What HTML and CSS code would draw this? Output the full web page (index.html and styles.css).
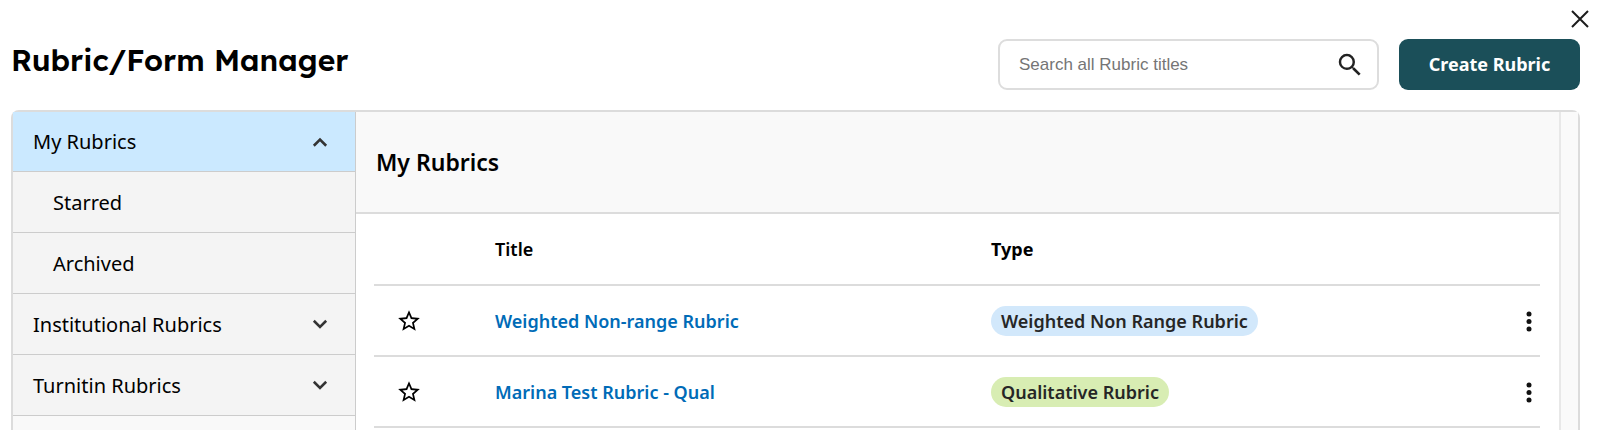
FILE: index.html
```html
<!DOCTYPE html>
<html lang="en">
<head>
  <meta charset="UTF-8" />
  <meta name="viewport" content="width=device-width, initial-scale=1.0"/>
  <title>Rubric/Form Manager</title>
  <link rel="stylesheet" href="styles.css">
</head>
<body>
  <div class="close-row">
    <button class="icon-btn" aria-label="Close">
      <svg width="18" height="18" viewBox="0 0 18 18"><path d="M1 1L17 17M17 1L1 17" fill="none" stroke="#1c1c1c" stroke-width="2"/></svg>
    </button>
  </div>

  <header class="top-bar">
    <h1>Rubric/Form Manager</h1>
    <form class="search-box">
      <input type="text" class="search-input" placeholder="Search all Rubric titles" aria-label="Search all Rubric titles">
      <button type="button" class="icon-btn" aria-label="Search">
        <svg width="30" height="30" viewBox="0 0 24 24" fill="#222"><path d="M15.5 14h-.79l-.28-.27A6.47 6.47 0 0 0 16 9.5 6.5 6.5 0 1 0 9.5 16c1.61 0 3.09-.59 4.23-1.57l.27.28v.79l5 4.99L20.49 19l-4.99-5zm-6 0C7.01 14 5 11.99 5 9.5S7.01 5 9.5 5 14 7.01 14 9.5 11.99 14 9.5 14z"/></svg>
      </button>
    </form>
    <button class="create-btn">Create Rubric</button>
  </header>

  <main class="panel">
    <nav class="sidebar">
      <button class="nav-item active" aria-expanded="true">
        My Rubrics
        <svg width="28" height="28" viewBox="0 0 24 24"><path d="M6.7 15.2L12 9.9l5.3 5.3" fill="none" stroke="#333" stroke-width="2.2"/></svg>
      </button>
      <a href="#" class="nav-item sub-item">Starred</a>
      <a href="#" class="nav-item sub-item">Archived</a>
      <button class="nav-item" aria-expanded="false">
        Institutional Rubrics
        <svg width="28" height="28" viewBox="0 0 24 24"><path d="M6.7 9.2L12 14.5l5.3-5.3" fill="none" stroke="#333" stroke-width="2.2"/></svg>
      </button>
      <button class="nav-item" aria-expanded="false">
        Turnitin Rubrics
        <svg width="28" height="28" viewBox="0 0 24 24"><path d="M6.7 9.2L12 14.5l5.3-5.3" fill="none" stroke="#333" stroke-width="2.2"/></svg>
      </button>
    </nav>

    <section class="content">
      <h2>My Rubrics</h2>
      <div class="table-wrap">
        <table class="rubric-table">
          <thead>
            <tr>
              <th class="star-col"></th>
              <th class="title-col">Title</th>
              <th class="type-col">Type</th>
              <th></th>
            </tr>
          </thead>
          <tbody>
            <tr>
              <td>
                <button class="icon-btn" aria-label="Star rubric">
                  <svg width="26" height="26" viewBox="0 0 24 24"><path d="M22 9.24l-7.19-.62L12 2 9.19 8.63 2 9.24l5.46 4.73L5.82 21 12 17.27 18.18 21l-1.63-7.03L22 9.24zM12 15.4l-3.76 2.27 1-4.28-3.32-2.88 4.38-.38L12 6.1l1.71 4.04 4.38.38-3.32 2.88 1 4.28L12 15.4z"/></svg>
                </button>
              </td>
              <td><a href="#" class="rubric-link">Weighted Non-range Rubric</a></td>
              <td><span class="tag tag-blue">Weighted Non Range Rubric</span></td>
              <td class="menu-cell">
                <button class="icon-btn" aria-label="More options">
                  <svg width="22" height="22" viewBox="0 0 22 22" fill="#111"><circle cx="11" cy="3" r="2.5"/><circle cx="11" cy="10.5" r="2.5"/><circle cx="11" cy="18" r="2.5"/></svg>
                </button>
              </td>
            </tr>
            <tr>
              <td>
                <button class="icon-btn" aria-label="Star rubric">
                  <svg width="26" height="26" viewBox="0 0 24 24"><path d="M22 9.24l-7.19-.62L12 2 9.19 8.63 2 9.24l5.46 4.73L5.82 21 12 17.27 18.18 21l-1.63-7.03L22 9.24zM12 15.4l-3.76 2.27 1-4.28-3.32-2.88 4.38-.38L12 6.1l1.71 4.04 4.38.38-3.32 2.88 1 4.28L12 15.4z"/></svg>
                </button>
              </td>
              <td><a href="#" class="rubric-link">Marina Test Rubric - Qual</a></td>
              <td><span class="tag tag-green">Qualitative Rubric</span></td>
              <td class="menu-cell">
                <button class="icon-btn" aria-label="More options">
                  <svg width="22" height="22" viewBox="0 0 22 22" fill="#111"><circle cx="11" cy="3" r="2.5"/><circle cx="11" cy="10.5" r="2.5"/><circle cx="11" cy="18" r="2.5"/></svg>
                </button>
              </td>
            </tr>
          </tbody>
        </table>
      </div>
    </section>
    <div class="scroll-track"></div>
  </main>
</body>
</html>
```
FILE: styles.css
```css
* {
    box-sizing: border-box;
}
body {
    display: flex;
    flex-direction: column;
    min-height: 100vh;
    margin: 0;
    padding: 10px 20px 0 11px;
    background-color: #fff;
    color: #000;
    font-family: "Noto Sans", sans-serif;
    font-size: 18px;
}
h1 {
    flex: 1;
    margin: 0;
    padding-bottom: 9px;
    font-family: Lexend, Inter, sans-serif;
    font-size: 30px;
    font-weight: 600;
    line-height: 40px;
}
.icon-btn {
    display: inline-flex;
    padding: 0;
    border: none;
    background: none;
    vertical-align: middle;
    cursor: pointer;
}
.icon-btn svg {
    display: block;
}
.close-row {
    display: flex;
    justify-content: flex-end;
    height: 29px;
    margin-right: -9px;
}
.top-bar {
    display: flex;
    align-items: center;
    gap: 20px;
}
.search-box {
    display: flex;
    align-items: center;
    width: 381px;
    height: 51px;
    padding: 0 12px 0 19px;
    border: 2px solid #ddd;
    border-radius: 9px;
}
.search-input {
    flex: 1;
    min-width: 0;
    padding: 0;
    border: none;
    outline: none;
    font-family: "Liberation Sans", Arial, sans-serif;
    font-size: 17px;
}
.search-input::placeholder {
    color: #757575;
}
.create-btn {
    width: 181px;
    height: 51px;
    padding: 0 0 1px;
    border: none;
    border-radius: 9px;
    background-color: #1b4f59;
    color: #fff;
    font-family: inherit;
    font-size: 18px;
    font-weight: 700;
    cursor: pointer;
}
.panel {
    display: flex;
    flex: 1;
    margin-top: 20px;
    border: 2px solid #dcdcdc;
    border-bottom: none;
    border-radius: 8px 8px 0 0;
    background-color: #f9f9f9;
}
.sidebar {
    width: 343px;
    border-right: 1px solid #ccc;
}
.nav-item {
    display: flex;
    align-items: center;
    justify-content: space-between;
    width: 100%;
    height: 61px;
    padding: 0 21px 0 20px;
    border: none;
    border-bottom: 1px solid #ccc;
    background-color: #f4f4f4;
    color: #000;
    font-family: inherit;
    font-size: 20px;
    text-decoration: none;
    cursor: pointer;
}
.nav-item.active {
    height: 60px;
    background-color: #cbe9ff;
}
.sub-item {
    padding-left: 40px;
}
.content {
    flex: 1;
    background-color: #fff;
}
h2 {
    margin: 0;
    padding: 35px 20px;
    border-bottom: 2px solid #dcdcdc;
    background-color: #f9f9f9;
    font-size: 23px;
    font-weight: 600;
    line-height: 30px;
}
.table-wrap {
    padding: 0 19px 0 18px;
}
.rubric-table {
    width: 100%;
    border-collapse: collapse;
    table-layout: fixed;
}
.rubric-table th, .rubric-table td {
    height: 71px;
    padding: 0;
    border-bottom: 2px solid #dcdcdc;
    text-align: left;
    line-height: 24px;
}
.rubric-table td:first-child {
    padding-left: 22px;
}
.star-col {
    width: 121px;
}
.rubric-table .title-col {
    width: 496px;
    font-weight: 600;
}
.type-col {
    width: 495px;
}
.rubric-link {
    color: #006bb7;
    font-weight: 600;
    text-decoration: none;
}
.rubric-link:hover {
    text-decoration: underline;
}
.tag {
    display: inline-block;
    padding: 3px 10px;
    border-radius: 15px;
    color: #262626;
    font-weight: 600;
}
.tag-blue {
    background-color: #d2e8fb;
}
.tag-green {
    background-color: #d8edb3;
}
.rubric-table .menu-cell {
    text-align: right;
}
.scroll-track {
    width: 19px;
    border-left: 2px solid #e8e8e8;
    background-color: #fafafa;
}
```
